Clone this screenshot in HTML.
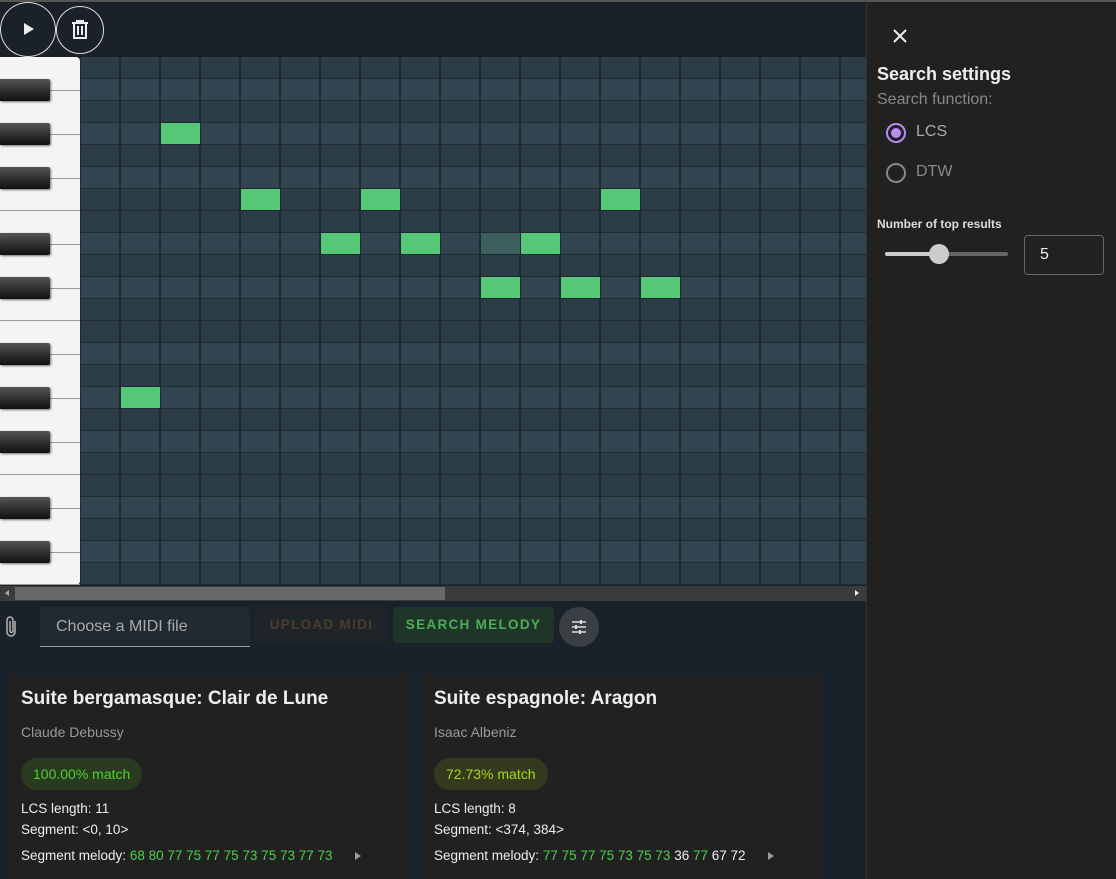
<!DOCTYPE html>
<html><head><meta charset="utf-8"><style>
*{box-sizing:border-box;margin:0;padding:0}
body{width:1116px;height:879px;background:#19212a;font-family:"Liberation Sans",sans-serif;position:relative;overflow:hidden;color:#eee}
#top{position:absolute;left:0;top:0;width:866px;height:57px;background:#1a2128;border-top:2px solid #555}
.cb{position:absolute;border:1px solid #ddd;border-radius:50%}
#piano{position:absolute;left:0;top:57px;width:80px;height:528px;background:#f4f4f4;border-radius:0 4px 4px 0}
#grid{position:absolute;left:80px;top:57px;width:786px;height:528px;overflow:hidden}
.row{position:absolute;left:0;width:786px;height:22px}
.vl{position:absolute;top:0;width:2px;height:528px;background:#1f2b33}
.hl{position:absolute;left:0;width:786px;height:1px;background:#1f2b33}
.n{position:absolute;width:39px;height:21px;background:#56c677}
.bk{position:absolute;left:0;width:50px;height:22px;background:linear-gradient(#555,#2a2a2a 60%,#111);border-radius:0 2px 2px 0;box-shadow:1px 1px 2px #0008}
.wl{position:absolute;left:0;width:80px;height:1px;background:#999}
#sb{position:absolute;left:0;top:586px;width:866px;height:15px;background:#3b3b3b}
#panel{position:absolute;left:866px;top:0;width:250px;height:879px;background:#212121;border-left:1px solid #333;border-top:2px solid #555}
.card{position:absolute;top:674px;width:401px;height:205px;background:#212121;border-radius:4px}
.card h2{position:absolute;left:13px;top:14px;font-size:19px;font-weight:bold;color:#eee}
.card .a{position:absolute;left:13px;top:50px;font-size:14px;color:#9a9a9a}
.chip{position:absolute;left:13px;top:84px;height:32px;border-radius:16px;padding:0 12px;line-height:32px;font-size:14px}
.card .t{position:absolute;left:13px;font-size:13.5px;color:#eee}
.g{color:#4ad04a}
.tri{display:inline-block;width:0;height:0;border-left:6px solid #999;border-top:4px solid transparent;border-bottom:4px solid transparent;margin-left:22px}
</style></head><body>
<div id="top">
<div class="cb" style="left:0;top:0;width:56px;height:55px"></div>
<svg style="position:absolute;left:22px;top:19px" width="14" height="16"><path d="M2 2 L12 8 L2 14Z" fill="#eee"/></svg>
<div class="cb" style="left:56px;top:4px;width:48px;height:48px"></div>
<svg style="position:absolute;left:71px;top:18px" width="18" height="20"><path d="M1 3H17M6 3V1H12V3M3 3V18H15V3M7 6V15M11 6V15" stroke="#eee" stroke-width="2" fill="none"/></svg>
</div>
<div id="piano"></div>
<div id="grid"></div>
<div id="sb"><div style="position:absolute;left:15px;top:1px;width:430px;height:13px;background:#686868"></div>
<div style="position:absolute;left:5px;top:4px;border-right:4px solid #aaa;border-top:3px solid transparent;border-bottom:3px solid transparent"></div>
<div style="position:absolute;left:855px;top:4px;border-left:4px solid #eee;border-top:3px solid transparent;border-bottom:3px solid transparent"></div></div>
<svg style="position:absolute;left:4px;top:615px" width="16" height="24"><path d="M11 6V17a4 4 0 0 1-8 0V5a3 3 0 0 1 6 0V16a1.5 1.5 0 0 1-3 0V6" stroke="#aaa" stroke-width="1.6" fill="none"/></svg>
<div style="position:absolute;left:40px;top:607px;width:210px;height:40px;background:#222a31;border-bottom:1px solid #999;font-size:16px;color:#aaa;padding:11px 16px">Choose a MIDI file</div>
<div style="position:absolute;left:255px;top:607px;width:133px;height:36px;background:#1f2429;border-radius:4px;font-size:13.5px;letter-spacing:1.3px;color:#4a3e2a;text-align:center;line-height:36px;font-weight:bold">UPLOAD MIDI</div>
<div style="position:absolute;left:393px;top:607px;width:161px;height:36px;background:#1f3528;border-radius:4px;font-size:13.5px;letter-spacing:1.3px;color:#4cae56;text-align:center;line-height:36px;font-weight:bold">SEARCH MELODY</div>
<div style="position:absolute;left:559px;top:607px;width:40px;height:40px;border-radius:50%;background:#3a3f44"></div>
<svg style="position:absolute;left:571px;top:619px" width="16" height="16"><path d="M1 3H15M1 8H15M1 13H15" stroke="#ddd" stroke-width="1.6"/><path d="M10 1V5M5 6V10M9 11V15" stroke="#ddd" stroke-width="2"/></svg>
<div class="card" style="left:8px">
<h2>Suite bergamasque: Clair de Lune</h2><div class="a">Claude Debussy</div>
<div class="chip" style="background:#2a3a21;color:#4ed12e">100.00% match</div>
<div class="t" style="top:127px">LCS length: 11</div><div class="t" style="top:148px">Segment: &lt;0, 10&gt;</div>
<div class="t" style="top:174px">Segment melody: <span class="g">68 80 77 75 77 75 73 75 73 77 73</span><span class="tri"></span></div>
</div>
<div class="card" style="left:421px">
<h2>Suite espagnole: Aragon</h2><div class="a">Isaac Albeniz</div>
<div class="chip" style="background:#353a1f;color:#a3d81a">72.73% match</div>
<div class="t" style="top:127px">LCS length: 8</div><div class="t" style="top:148px">Segment: &lt;374, 384&gt;</div>
<div class="t" style="top:174px">Segment melody: <span class="g">77 75 77 75 73 75 73</span> 36 <span class="g">77</span> 67 72<span class="tri"></span></div>
</div>
<div id="panel">
<svg style="position:absolute;left:26px;top:27px" width="14" height="14"><path d="M1 1L13 13M13 1L1 13" stroke="#eee" stroke-width="2"/></svg>
<div style="position:absolute;left:10px;top:62px;font-size:18px;font-weight:bold;color:#eee">Search settings</div>
<div style="position:absolute;left:10px;top:89px;font-size:16px;color:#888">Search function:</div>
<div style="position:absolute;left:19px;top:121px;width:20px;height:20px;border:2px solid #b98cf0;border-radius:50%"><div style="margin:3px;width:10px;height:10px;border-radius:50%;background:#b98cf0"></div></div>
<div style="position:absolute;left:49px;top:121px;font-size:16px;color:#aaa">LCS</div>
<div style="position:absolute;left:19px;top:161px;width:20px;height:20px;border:2px solid #888;border-radius:50%"></div>
<div style="position:absolute;left:49px;top:161px;font-size:16px;color:#888">DTW</div>
<div style="position:absolute;left:10px;top:215px;font-size:12px;font-weight:bold;color:#ddd">Number of top results</div>
<div style="position:absolute;left:18px;top:250px;width:123px;height:4px;border-radius:2px;background:#666"></div>
<div style="position:absolute;left:18px;top:250px;width:55px;height:4px;border-radius:2px;background:#ccc"></div>
<div style="position:absolute;left:62px;top:242px;width:20px;height:20px;border-radius:50%;background:#ccc"></div>
<div style="position:absolute;left:157px;top:233px;width:80px;height:40px;border:1px solid #666;border-radius:4px;font-size:16px;color:#eee;padding:10px 15px">5</div>
</div>
<script>
var g=document.getElementById('grid'),p=document.getElementById('piano'),h='',ph='',pk='';
var blk=[1,3,5,8,10];
for(var r=0;r<24;r++){var b=blk.indexOf(r%12)>=0;h+='<div class="row" style="top:'+r*22+'px;background:'+(b?'#32444f':'#2c3c47')+'"></div><div class="hl" style="top:'+(r*22+21)+'px"></div>';
if(b){pk+='<div class="bk" style="top:'+(r*22)+'px"></div>';ph+='<div class="wl" style="top:'+(r*22+11)+'px"></div>';}
if(r%12==6||r%12==11){ph+='<div class="wl" style="top:'+(r*22+21)+'px"></div>';}}
for(var c=0;c<20;c++)h+='<div class="vl" style="left:'+(c*40-1)+'px"></div>';
var notes=[[3,2],[6,4],[6,7],[6,13],[8,6],[8,8],[8,11],[10,10],[10,12],[10,14],[15,1]];
notes.forEach(function(n){h+='<div class="n" style="top:'+(n[0]*22)+'px;left:'+(n[1]*40+1)+'px"></div>'});
h+='<div class="n" style="top:176px;left:401px;background:#3d5f60"></div>';
g.innerHTML=h;p.innerHTML=ph+pk;
</script>
</body></html>
